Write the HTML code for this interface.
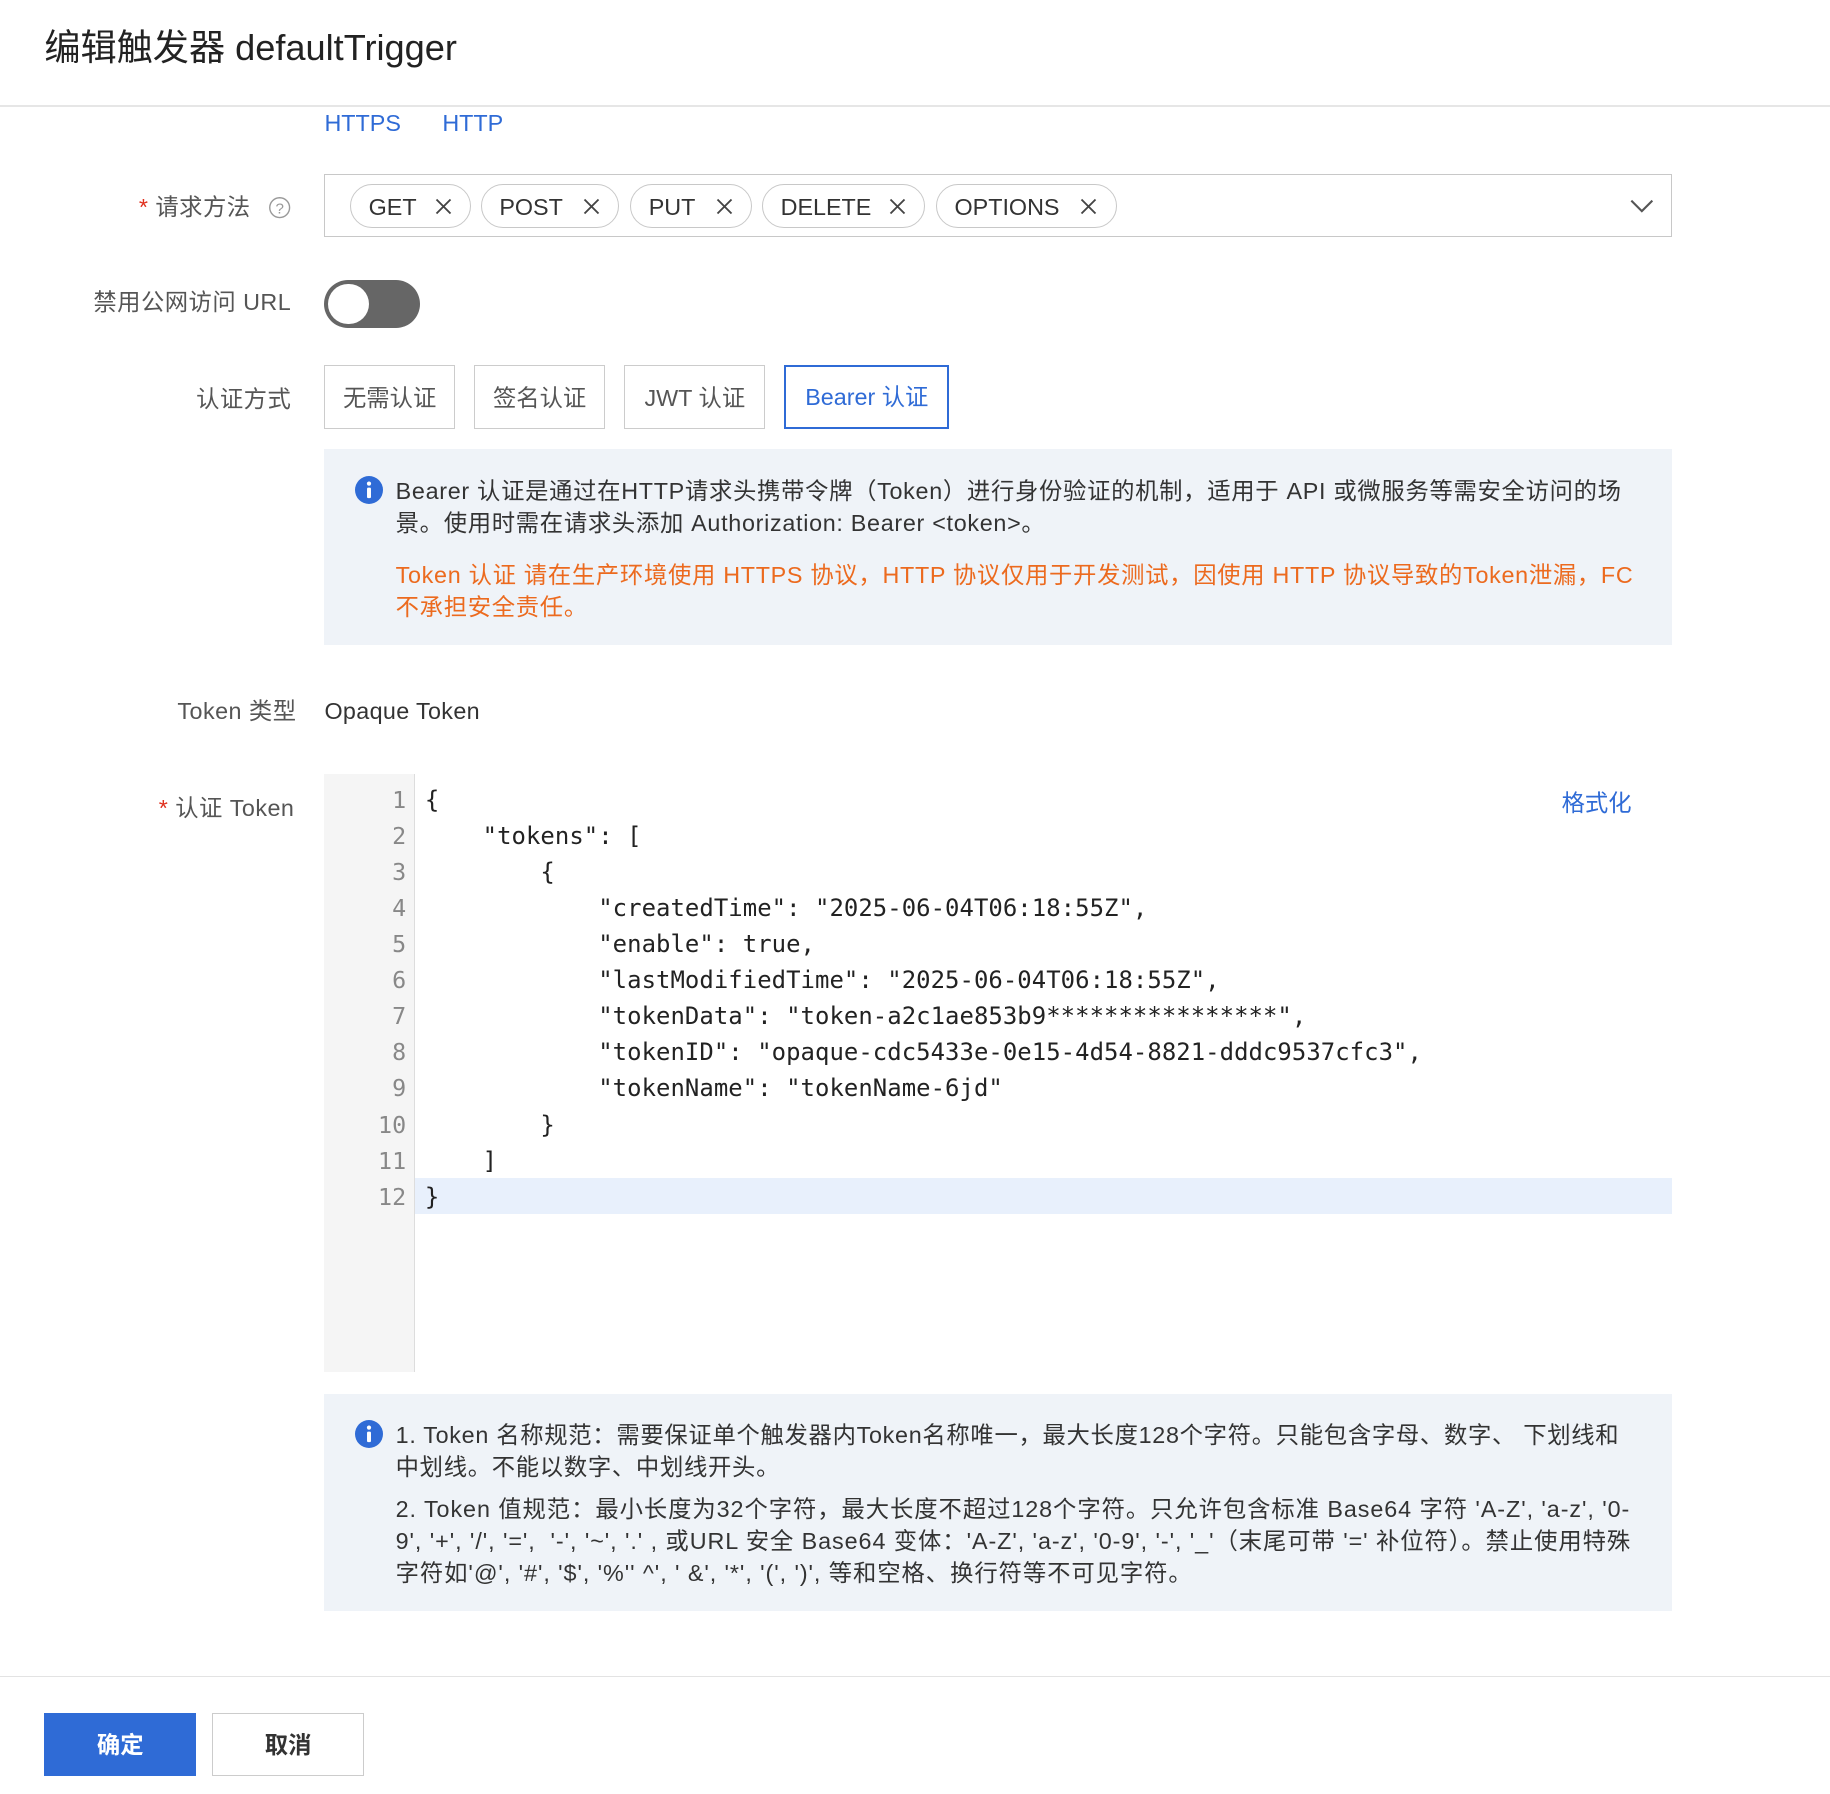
<!DOCTYPE html>
<html><head><meta charset="utf-8"><style>
html,body{margin:0;padding:0;background:#fff;overflow:hidden}
body{width:1830px;height:1794px}
#w{position:relative;width:1568px;height:1536px;zoom:1.16709;font-family:"Liberation Sans","Noto Sans CJK SC",sans-serif;color:#333;font-size:20px}
.a{position:absolute;white-space:nowrap}
.lbl{position:absolute;white-space:nowrap;text-align:right;color:#555;line-height:24px;letter-spacing:0.4px}
.tag{position:absolute;top:158px;height:36px;border:1px solid #c8c8c8;border-radius:19px;line-height:38px;font-size:20px;color:#333;box-sizing:content-box}
.tag span{position:absolute;left:15px}
.tag i{position:absolute;right:14px;top:9px;width:18px;height:18px;display:block}
.tag i svg{display:block}
.btn{position:absolute;top:313px;height:53px;border:1px solid #ccc;line-height:55px;text-align:center;color:#555;font-size:20px}
.box{position:absolute;left:278px;width:1155px;background:#eff3f8}
.info{position:absolute;width:24px;height:24px}
.code{position:absolute;left:364px;font-family:"DejaVu Sans Mono","Liberation Mono",monospace;font-size:20.5px;letter-spacing:0.05px;color:#222;white-space:pre;line-height:30.9px}
.ln{position:absolute;left:278px;width:70px;text-align:right;font-family:"DejaVu Sans Mono","Liberation Mono",monospace;font-size:20px;color:#888;line-height:30.9px}
.t{position:absolute;left:339px;line-height:27.5px;white-space:nowrap;font-size:20px;letter-spacing:0.6px}
</style></head><body><div id="w">
<div class="a" style="left:38px;top:21px;font-size:31px;color:#222;line-height:40px">编辑触发器 defaultTrigger</div>
<div class="a" style="left:0;top:90px;width:1568px;height:2px;background:#e6e6e6"></div>
<div class="a" style="left:278px;top:93px;color:#2f6bd6;line-height:24px">HTTPS</div>
<div class="a" style="left:379px;top:93px;color:#2f6bd6;line-height:24px">HTTP</div>

<div class="lbl" style="left:119px;top:165px"><span style="color:#e0301e">*</span> 请求方法</div>
<svg class="a" style="left:230px;top:168px" width="20" height="20" viewBox="0 0 20 20"><circle cx="10" cy="10" r="8.5" fill="none" stroke="#999" stroke-width="1.2"/><text x="10" y="15" font-size="13" text-anchor="middle" fill="#999" font-family="Liberation Sans">?</text></svg>
<div class="a" style="left:278px;top:149px;width:1153px;height:52px;border:1px solid #c8c8c8"></div>
<div class="tag" style="left:300px;width:102px"><span>GET</span><i><svg width="18" height="18"><path d="M3 3L15 15M15 3L3 15" stroke="#444" stroke-width="1.6"/></svg></i></div>
<div class="tag" style="left:412px;width:117px"><span>POST</span><i><svg width="18" height="18"><path d="M3 3L15 15M15 3L3 15" stroke="#444" stroke-width="1.6"/></svg></i></div>
<div class="tag" style="left:540px;width:103px"><span>PUT</span><i><svg width="18" height="18"><path d="M3 3L15 15M15 3L3 15" stroke="#444" stroke-width="1.6"/></svg></i></div>
<div class="tag" style="left:653px;width:138px"><span>DELETE</span><i><svg width="18" height="18"><path d="M3 3L15 15M15 3L3 15" stroke="#444" stroke-width="1.6"/></svg></i></div>
<div class="tag" style="left:802px;width:153px"><span>OPTIONS</span><i><svg width="18" height="18"><path d="M3 3L15 15M15 3L3 15" stroke="#444" stroke-width="1.6"/></svg></i></div>
<svg class="a" style="left:1396px;top:168px" width="22" height="16"><path d="M2 4L11 13L20 4" fill="none" stroke="#555" stroke-width="1.8"/></svg>

<div class="lbl" style="left:80px;top:247px">禁用公网访问 URL</div>
<div class="a" style="left:278px;top:240px;width:82px;height:41px;border-radius:21px;background:#666"></div>
<div class="a" style="left:281px;top:243px;width:35px;height:35px;border-radius:50%;background:#fff"></div>

<div class="lbl" style="left:168px;top:330px">认证方式</div>
<div class="btn" style="left:278px;width:110px">无需认证</div>
<div class="btn" style="left:406px;width:111px">签名认证</div>
<div class="btn" style="left:535px;width:119px">JWT 认证</div>
<div class="btn" style="left:672px;width:138px;border:2px solid #2f6bd6;height:51px;line-height:53px;color:#2f6bd6">Bearer 认证</div>

<div class="box" style="top:385px;height:168px"></div>
<svg class="info" style="left:304px;top:408px" viewBox="0 0 24 24"><circle cx="12" cy="12" r="12" fill="#2f6bd6"/><circle cx="12" cy="6.5" r="1.8" fill="#fff"/><rect x="10.3" y="10" width="3.4" height="9" rx="1" fill="#fff"/></svg>
<div class="t" style="top:407px">Bearer 认证是通过在HTTP请求头携带令牌（Token）进行身份验证的机制，适用于 API 或微服务等需安全访问的场<br>景。使用时需在请求头添加 Authorization: Bearer &lt;token&gt;。</div>
<div class="t" style="top:479px;color:#ec6a1e">Token 认证 请在生产环境使用 HTTPS 协议，HTTP 协议仅用于开发测试，因使用 HTTP 协议导致的Token泄漏，FC<br>不承担安全责任。</div>

<div class="lbl" style="left:152px;top:597px">Token 类型</div>
<div class="a" style="left:278px;top:597px;line-height:24px;color:#333;letter-spacing:0.3px">Opaque Token</div>

<div class="lbl" style="left:136px;top:680px"><span style="color:#e0301e">*</span> 认证 Token</div>
<div class="a" style="left:278px;top:663px;width:77px;height:513px;background:#f5f5f5;border-right:1px solid #ddd"></div>
<div class="a" style="left:356px;top:1009px;width:1077px;height:31px;background:#e8f0fc"></div>
<div class="ln" style="top:670px">1<br>2<br>3<br>4<br>5<br>6<br>7<br>8<br>9<br>10<br>11<br>12</div>
<div class="code" style="top:670px">{
    "tokens": [
        {
            "createdTime": "2025-06-04T06:18:55Z",
            "enable": true,
            "lastModifiedTime": "2025-06-04T06:18:55Z",
            "tokenData": "token-a2c1ae853b9****************",
            "tokenID": "opaque-cdc5433e-0e15-4d54-8821-dddc9537cfc3",
            "tokenName": "tokenName-6jd"
        }
    ]
}</div>
<div class="a" style="left:1338px;top:676px;color:#2f6bd6;line-height:24px">格式化</div>

<div class="box" style="top:1194px;height:186px"></div>
<svg class="info" style="left:304px;top:1217px" viewBox="0 0 24 24"><circle cx="12" cy="12" r="12" fill="#2f6bd6"/><circle cx="12" cy="6.5" r="1.8" fill="#fff"/><rect x="10.3" y="10" width="3.4" height="9" rx="1" fill="#fff"/></svg>
<div class="t" style="top:1216px">1. Token 名称规范：需要保证单个触发器内Token名称唯一，最大长度128个字符。只能包含字母、数字、 下划线和<br>中划线。不能以数字、中划线开头。</div>
<div class="t" style="top:1279px;letter-spacing:0.8px">2. Token 值规范：最小长度为32个字符，最大长度不超过128个字符。只允许包含标准 Base64 字符 'A-Z', 'a-z', '0-<br>9', '+', '/', '=',&nbsp; '-', '~', '.' , 或URL 安全 Base64 变体：'A-Z', 'a-z', '0-9', '-', '_'（末尾可带 '=' 补位符）。禁止使用特殊<br>字符如'@', '#', '$', '%'' ^', ' &amp;', '*', '(', ')', 等和空格、换行符等不可见字符。</div>

<div class="a" style="left:0;top:1436px;width:1568px;height:1px;background:#e3e3e3"></div>
<div class="a" style="left:38px;top:1468px;width:130px;height:54px;background:#2f6bd6;color:#fff;font-weight:bold;text-align:center;line-height:56px">确定</div>
<div class="a" style="left:182px;top:1468px;width:128px;height:52px;border:1px solid #ccc;color:#333;font-weight:bold;text-align:center;line-height:54px">取消</div>
</div></body></html>
